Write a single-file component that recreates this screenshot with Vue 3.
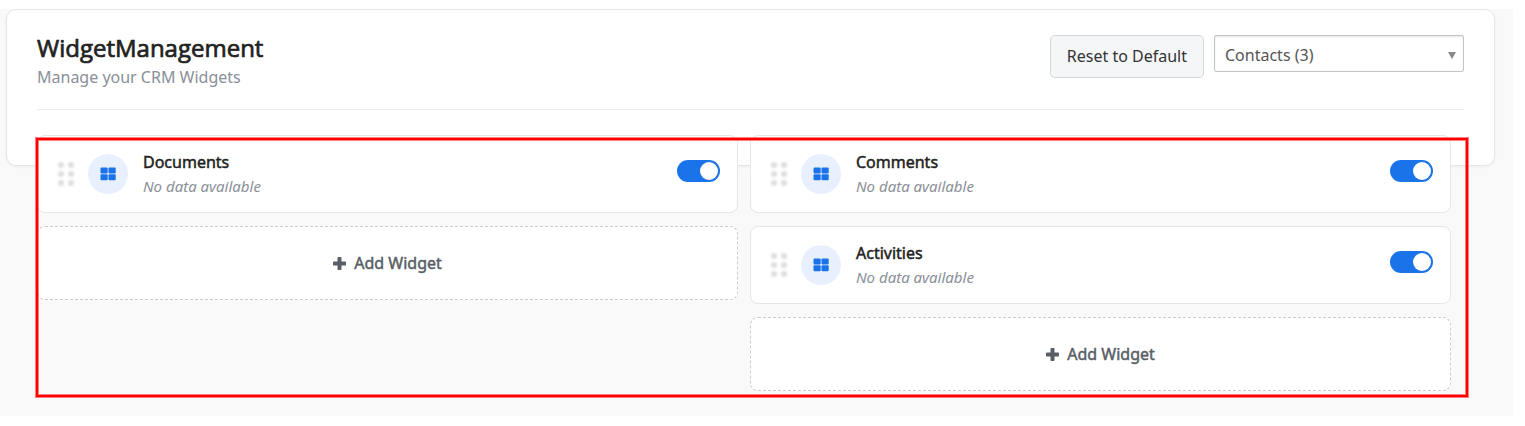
<script setup>
import { ref } from "vue";

const modules = ["Contacts (3)"];
const selectedModule = ref(modules[0]);

const columns = ref([
  [{ name: "Documents", enabled: true }],
  [
    { name: "Comments", enabled: true },
    { name: "Activities", enabled: true },
  ],
]);

const resetWidgets = () => {
  columns.value.flat().forEach((widget) => {
    widget.enabled = true;
  });
};
</script>

<template>
  <main class="page">
    <section class="panel">
      <header class="panel-header">
        <div>
          <h1 class="title">WidgetManagement</h1>
          <p class="subtitle">Manage your CRM Widgets</p>
        </div>
        <div class="actions">
          <button type="button" class="reset" @click="resetWidgets">
            Reset to Default
          </button>
          <div class="select-wrap">
            <select v-model="selectedModule" class="select" aria-label="Module">
              <option v-for="item in modules" :key="item">{{ item }}</option>
            </select>
            <svg class="arrow" viewBox="0 0 8 8" aria-hidden="true">
              <path d="M0 1h8L4 8z" fill="#888" />
            </svg>
          </div>
        </div>
      </header>
    </section>

    <section class="board">
      <div v-for="(column, index) in columns" :key="index" class="column">
        <article v-for="widget in column" :key="widget.name" class="widget">
          <svg class="handle" viewBox="0 0 18 26" aria-hidden="true">
            <g fill="#dedede">
              <circle cx="4" cy="4" r="3" />
              <circle cx="14" cy="4" r="3" />
              <circle cx="4" cy="13" r="3" />
              <circle cx="14" cy="13" r="3" />
              <circle cx="4" cy="22" r="3" />
              <circle cx="14" cy="22" r="3" />
            </g>
          </svg>
          <div class="icon">
            <svg viewBox="0 0 16 14" aria-hidden="true">
              <g fill="#1a73e8">
                <rect x="0.5" y="0.5" width="7.2" height="6" rx="1" />
                <rect x="8.5" y="0.5" width="7.2" height="6" rx="1" />
                <rect x="0.5" y="7.3" width="7.2" height="6" rx="1" />
                <rect x="8.5" y="7.3" width="7.2" height="6" rx="1" />
              </g>
            </svg>
          </div>
          <div class="info">
            <h2 class="name">{{ widget.name }}</h2>
            <p class="empty">No data available</p>
          </div>
          <input
            v-model="widget.enabled"
            type="checkbox"
            role="switch"
            class="toggle"
            :aria-label="widget.name"
          />
        </article>
        <button type="button" class="add">
          <svg viewBox="0 0 13 13" aria-hidden="true">
            <path
              d="M5 0h3a1 1 0 0 1 .5 1v3.5H12a1 1 0 0 1 1 .5v3a1 1 0 0 1-1 .5H8.5V12a1 1 0 0 1-.5 1H5a1 1 0 0 1-.5-1V8.500H1A1 1 0 0 1 0 8V5a1 1 0 0 1 1-.5h3.500V1A1 1 0 0 1 5 0z"
              fill="#5a5e66"
            />
          </svg>
          <span>Add Widget</span>
        </button>
      </div>
      <div class="outline"></div>
    </section>
  </main>
</template>

<style>
body {
  background: #fff;
}
</style>

<style scoped>
.page {
  margin: 9px 12px 10px 0;
  padding: 0 18px 25px 6px;
  background: #f9f9f9;
  font-family: "Noto Sans", "Open Sans", sans-serif;
  font-size: 16px;
}
.page * {
  box-sizing: border-box;
}
.panel {
  padding: 25px 30px 55px;
  border: 1px solid #e4e6ea;
  border-radius: 10px;
  background: #fff;
  box-shadow: 0 1px 3px rgba(0, 0, 0, 0.05);
}
.panel-header {
  display: flex;
  justify-content: space-between;
  align-items: flex-start;
  padding-bottom: 20px;
  border-bottom: 1px solid #ececee;
}
.title {
  margin: 0;
  color: #222;
  font-family: "Open Sans", sans-serif;
  font-size: 24px;
  font-weight: 400;
  line-height: 26px;
  -webkit-text-stroke: 0.03em;
}
.subtitle {
  margin: 4px 0 0;
  color: #8a8f98;
  line-height: 24px;
}
.actions {
  display: flex;
  align-items: flex-start;
  gap: 10px;
}
.reset {
  height: 43px;
  padding: 0 16px 2px;
  border: 1px solid #d3d7dd;
  border-radius: 5px;
  background: #f5f6f8;
  color: #333;
  font: inherit;
}
.select-wrap {
  position: relative;
}
.select {
  appearance: none;
  display: block;
  width: 250px;
  height: 37px;
  padding: 2px 24px 0 10px;
  border: 1px solid #c4c4c4;
  border-radius: 2px;
  background: #fff;
  box-shadow: inset 0 1px 2px rgba(0, 0, 0, 0.1);
  color: #555;
  font: inherit;
}
.arrow {
  position: absolute;
  top: 16px;
  right: 8px;
  width: 8px;
  height: 8px;
  pointer-events: none;
}
.board {
  position: relative;
  display: flex;
  align-items: flex-start;
  gap: 12px;
  margin: -31px 31px 0;
  padding-right: 13px;
}
.column {
  display: flex;
  flex: 1;
  flex-direction: column;
  gap: 13px;
}
.widget {
  display: flex;
  align-items: center;
  height: 78px;
  padding: 0 17px 0 19px;
  border: 1px solid #e4e6ea;
  border-radius: 8px;
  background: #fff;
}
.handle {
  width: 18px;
  height: 26px;
  margin-right: 13px;
  filter: blur(1px);
}
.icon {
  display: flex;
  align-items: center;
  justify-content: center;
  width: 40px;
  height: 40px;
  margin-right: 15px;
  border-radius: 50%;
  background: #e9f0fd;
}
.icon svg {
  width: 16px;
  height: 14px;
}
.info {
  flex: 1;
}
.name {
  margin: 0;
  color: #222;
  font-size: 16px;
  font-weight: 400;
  line-height: 24px;
  -webkit-text-stroke: 0.03em;
}
.empty {
  margin: 0;
  color: #8a8f98;
  font-size: 15px;
  font-style: italic;
  line-height: 24px;
}
.toggle {
  appearance: none;
  display: flex;
  width: 43px;
  height: 22px;
  margin: 0 0 6px;
  padding: 2px;
  border-radius: 11px;
  background: #ccc;
}
.toggle::before {
  content: "";
  width: 18px;
  height: 18px;
  border-radius: 50%;
  background: #fff;
}
.toggle:checked {
  justify-content: flex-end;
  background: #1a73e8;
}
.add {
  display: flex;
  align-items: center;
  justify-content: center;
  gap: 8px;
  height: 74px;
  border: 1px dashed #c8cdd4;
  border-radius: 8px;
  background: #fff;
  color: #5a5e66;
  font: inherit;
  -webkit-text-stroke: 0.03em;
}
.add svg {
  width: 13px;
  height: 13px;
}
.outline {
  position: absolute;
  top: 3px;
  right: -4px;
  bottom: -6px;
  left: -1px;
  border: 2px solid #f00;
  box-shadow:
    0 0 0 1px rgba(255, 0, 0, 0.5),
    inset 0 0 0 1px rgba(255, 0, 0, 0.5);
  pointer-events: none;
}
</style>
